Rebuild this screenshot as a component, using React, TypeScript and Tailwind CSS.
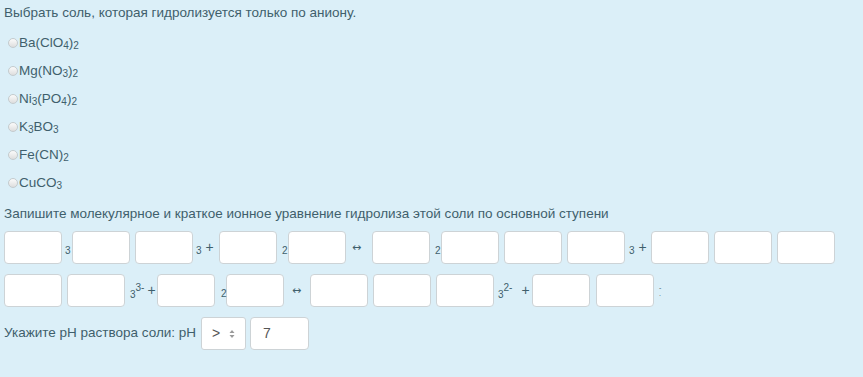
import React from "react";

const font = { fontFamily: '"Liberation Sans", Arial, sans-serif' };
const arrowFont = { fontFamily: '"DejaVu Sans", sans-serif' };

function Radio() {
  return (
    <span className="inline-block w-[10px] h-[10px] rounded-full border border-[#c4cbce] bg-gradient-to-b from-[#fbfbfb] to-[#dedede] ml-[4px] mr-[1px] shrink-0" />
  );
}

function Box({ w = "w-[58px]" }: { w?: string }) {
  return (
    <div className={`${w} h-[33px] shrink-0 bg-white border border-[#cdd3d6] rounded-[4px]`} />
  );
}

function Sub({ children }: { children: React.ReactNode }) {
  return <sub className="text-[10px]">{children}</sub>;
}

function Option({ children }: { children: React.ReactNode }) {
  return (
    <div className="h-[28px] flex items-center text-[13.5px]">
      <Radio />
      <span>{children}</span>
    </div>
  );
}

export default function App() {
  return (
    <div
      className="w-[863px] h-[377px] bg-[#dbeff8] text-[#3f5f6c] pl-[4px] pt-[3px] overflow-hidden"
      style={font}
    >
      <div className="h-[20px] leading-[20px] text-[13.5px]">
        Выбрать соль, которая гидролизуется только по аниону.
      </div>
      <div className="mt-[6px]">
        <Option>
          Ba(ClO<Sub>4</Sub>)<Sub>2</Sub>
        </Option>
        <Option>
          Mg(NO<Sub>3</Sub>)<Sub>2</Sub>
        </Option>
        <Option>
          Ni<Sub>3</Sub>(PO<Sub>4</Sub>)<Sub>2</Sub>
        </Option>
        <Option>
          K<Sub>3</Sub>BO<Sub>3</Sub>
        </Option>
        <Option>
          Fe(CN)<Sub>2</Sub>
        </Option>
        <Option>
          CuCO<Sub>3</Sub>
        </Option>
      </div>
      <div className="mt-[7px] h-[20px] leading-[20px] text-[13.5px]">
        Запишите молекулярное и краткое ионное уравнение гидролиза этой соли по основной ступени
      </div>

      {/* row 1 */}
      <div className="mt-[7px] flex items-center text-[14px]">
        <Box />
        <span className="w-[10px] pl-[3px] text-[10px] translate-y-[3px]">3</span>
        <Box />
        <div className="w-[5px]" />
        <Box />
        <span className="w-[26px] pl-[3px] flex items-center">
          <span className="text-[10px] translate-y-[3px]">3</span>
          <span className="ml-[4px]">+</span>
        </span>
        <Box />
        <span className="w-[11px] pl-[5px] text-[10px] translate-y-[3px]">2</span>
        <Box />
        <span className="w-[26px] pl-[6px] text-[11px] leading-none" style={arrowFont}>↔</span>
        <Box />
        <span className="w-[11px] pl-[5px] text-[10px] translate-y-[3px]">2</span>
        <Box />
        <div className="w-[5px]" />
        <Box />
        <div className="w-[5px]" />
        <Box />
        <span className="w-[26px] pl-[4px] flex items-center">
          <span className="text-[10px] translate-y-[3px]">3</span>
          <span className="ml-[4px]">+</span>
        </span>
        <Box />
        <div className="w-[5px]" />
        <Box />
        <div className="w-[5px]" />
        <Box />
      </div>

      {/* row 2 */}
      <div className="mt-[10px] flex items-center text-[14px]">
        <Box />
        <div className="w-[5px]" />
        <Box />
        <span className="w-[32px] pl-[5px] flex items-center">
          <span className="text-[10px] translate-y-[4px]">3</span>
          <span className="text-[10px] -translate-y-[3px]">3-</span>
          <span className="ml-[3px]">+</span>
        </span>
        <Box />
        <span className="w-[11px] pl-[6px] text-[10px] translate-y-[3px]">2</span>
        <Box />
        <span className="w-[26px] pl-[8px] text-[11px] leading-none" style={arrowFont}>↔</span>
        <Box />
        <div className="w-[5px]" />
        <Box />
        <div className="w-[5px]" />
        <Box />
        <span className="w-[38px] pl-[4px] flex items-center">
          <span className="text-[10px] translate-y-[4px]">3</span>
          <span className="text-[10px] -translate-y-[3px]">2-</span>
          <span className="ml-[9px]">+</span>
        </span>
        <Box />
        <div className="w-[6px]" />
        <Box />
        <span className="pl-[5px] flex flex-col gap-[1px] text-[7px] leading-[5px]">
          <span>-</span>
          <span>.</span>
        </span>
      </div>

      {/* pH row */}
      <div className="mt-[10px] flex items-center text-[13.5px]">
        <span>Укажите pH раствора соли: pH</span>
        <div className="ml-[5px] w-[45px] h-[33px] bg-white border border-[#cdd3d6] rounded-[3px] flex items-center pl-[10px] text-[#555]">
          <span className="text-[14px]">&gt;</span>
          <svg width="6" height="10" viewBox="0 0 6 10" className="ml-[9px]">
            <path d="M0.5 4 L3 1 L5.5 4 Z" fill="#999" />
            <path d="M0.5 6 L3 9 L5.5 6 Z" fill="#999" />
          </svg>
        </div>
        <div className="ml-[4px] w-[59px] h-[33px] bg-white border border-[#cdd3d6] rounded-[4px] flex items-center pl-[12px] text-[#555] text-[14px]">
          7
        </div>
      </div>
    </div>
  );
}
